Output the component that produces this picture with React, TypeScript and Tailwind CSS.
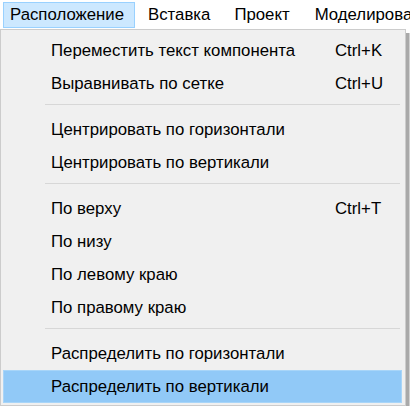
const font = { fontFamily: '"Liberation Sans", Arial, sans-serif' };

type Item = { label: string; shortcut?: string; active?: boolean } | 'sep';

const items: Item[] = [
  { label: 'Переместить текст компонента', shortcut: 'Ctrl+K' },
  { label: 'Выравнивать по сетке', shortcut: 'Ctrl+U' },
  'sep',
  { label: 'Центрировать по горизонтали' },
  { label: 'Центрировать по вертикали' },
  'sep',
  { label: 'По верху', shortcut: 'Ctrl+T' },
  { label: 'По низу' },
  { label: 'По левому краю' },
  { label: 'По правому краю' },
  'sep',
  { label: 'Распределить по горизонтали' },
  { label: 'Распределить по вертикали', active: true },
];

function MenuRow({ label, shortcut, active }: { label: string; shortcut?: string; active?: boolean }) {
  return (
    <div
      className={`h-[33px] flex items-center ml-[2px] mr-[3px] border ${active ? 'bg-[#91c9f7] border-[#a8d5f8]' : 'border-transparent'}`}
    >
      <span className='pl-[47px] w-[331px] shrink-0 whitespace-nowrap'>{label}</span>
      {shortcut && <span className='whitespace-nowrap'>{shortcut}</span>}
    </div>
  );
}

function App() {
  return (
    <div className='w-[410px] h-[406px] bg-white overflow-hidden text-[16.8px] text-black' style={font}>
      <div className='h-[29px] flex items-center whitespace-nowrap overflow-hidden'>
        <div className='ml-[3px] h-[26px] w-[132px] shrink-0 flex items-center pl-[6px] bg-[#cce8ff] border border-[#99d1ff]'>
          Расположение
        </div>
        <div className='ml-[13px] shrink-0'>Вставка</div>
        <div className='ml-[24px] shrink-0'>Проект</div>
        <div className='ml-[25px] shrink-0'>Моделирова</div>
      </div>

      <div className='flex'>
        <div className='w-[406px] h-[377px] shrink-0 bg-[#f0f0f0] border border-[#cccccc] pt-[4px]'>
          {items.map((it, i) =>
            it === 'sep' ? (
              <div key={i} className='h-[13px] pt-[4px] pl-[44px] pr-[5px]'>
                <div className='h-px bg-[#d7d7d7]' />
              </div>
            ) : (
              <MenuRow key={i} {...it} />
            )
          )}
        </div>
        <div className='w-[4px] h-[377px] shrink-0 bg-[#a9a9a9] border-r border-[#d0d0d0] mt-[4px]' />
      </div>
    </div>
  );
}

export default App;
